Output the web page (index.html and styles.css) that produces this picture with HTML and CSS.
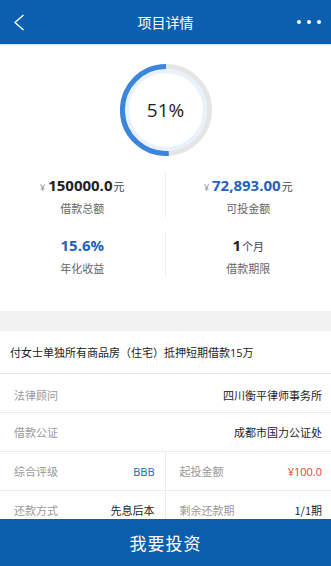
FILE: index.html
```html
<!DOCTYPE html>
<html lang="zh-CN">
<head>
<meta charset="utf-8">
<title>项目详情</title>
<link rel="stylesheet" href="styles.css">
</head>
<body>
<div class="page">
  <header class="topbar">
    <svg class="back" width="12" height="17" viewBox="0 0 12 17"><polyline points="10.5,1 2,8.5 10.5,16" fill="none" stroke="#fff" stroke-width="1.4"/></svg>
    <div class="title">项目详情</div>
    <svg class="more" width="26" height="6" viewBox="0 0 26 6"><circle cx="3" cy="3" r="2" fill="#fff"/><circle cx="13" cy="3" r="2" fill="#fff"/><circle cx="23" cy="3" r="2" fill="#fff"/></svg>
  </header>
  <main class="content">
    <section class="summary">
      <div class="ring">
        <svg width="92" height="92" viewBox="0 0 92 92">
          <circle cx="46" cy="46" r="43.5" fill="none" stroke="#e5e5e5" stroke-width="5"/>
          <circle cx="46" cy="46" r="39" fill="none" stroke="#e8f1fc" stroke-width="4"/>
          <path d="M46 2.5 A43.5 43.5 0 1 0 48.73 89.41" fill="none" stroke="#3b86dc" stroke-width="5"/>
        </svg>
        <span class="ring-text">51%</span>
      </div>
      <div class="stats">
        <div class="stat">
          <div class="val"><span class="yen">¥</span><b>150000.0</b><span class="unit">元</span></div>
          <div class="lbl">借款总额</div>
        </div>
        <div class="stat">
          <div class="val"><span class="yen">¥</span><b class="blue">72,893.00</b><span class="unit">元</span></div>
          <div class="lbl">可投金额</div>
        </div>
        <div class="stat">
          <div class="val"><b class="blue">15.6%</b></div>
          <div class="lbl">年化收益</div>
        </div>
        <div class="stat">
          <div class="val"><b>1</b><span class="unit">个月</span></div>
          <div class="lbl">借款期限</div>
        </div>
      </div>
    </section>
    <div class="gap"></div>
    <section class="details">
      <div class="proj-title">付女士单独所有商品房（住宅）抵押短期借款15万</div>
      <div class="row"><span class="k">法律顾问</span><span class="v">四川衡平律师事务所</span></div>
      <div class="row"><span class="k">借款公证</span><span class="v">成都市国力公证处</span></div>
      <div class="row split">
        <div class="cell"><span class="k">综合评级</span><span class="v blue">BBB</span></div>
        <div class="cell"><span class="k">起投金额</span><span class="v red">¥100.0</span></div>
      </div>
      <div class="row split">
        <div class="cell"><span class="k">还款方式</span><span class="v">先息后本</span></div>
        <div class="cell"><span class="k">剩余还款期</span><span class="v">1/1期</span></div>
      </div>
    </section>
  </main>
  <button class="invest">我要投资</button>
</div>
</body>
</html>
```

FILE: styles.css
```css
* { box-sizing: border-box; }
html, body { margin: 0; padding: 0; }
body {
  font-family: "Open Sans", "Noto Sans CJK SC", sans-serif;
  background: #fff;
  color: #333;
}
.page {
  height: 100vh;
  display: flex;
  flex-direction: column;
  overflow: hidden;
}
.topbar {
  flex: 0 0 auto;
  height: 45px;
  background: #0b5fae;
  border-bottom: 1px solid #d5e4f3;
  display: grid;
  grid-template-columns: 1fr auto 1fr;
  align-items: center;
}
.back { margin-left: 13px; }
.title {
  color: #fff;
  font-size: 14px;
  font-family: "Noto Sans CJK SC", sans-serif;
}
.more { justify-self: end; margin-right: 9px; }
.content {
  flex: 1 1 auto;
  overflow: hidden;
}
.summary {
  padding-top: 19px;
  padding-bottom: 33px;
}
.ring {
  width: 92px;
  height: 92px;
  margin: 0 auto;
  display: grid;
  place-items: center;
}
.ring svg, .ring-text { grid-area: 1 / 1; }
.ring-text {
  font-size: 19px;
  color: #222;
}
.stats {
  margin-top: 16px;
  display: grid;
  grid-template-columns: 1fr 1fr;
  row-gap: 14px;
}
.stat {
  padding: 2px 0;
  text-align: center;
}
.stat:nth-child(odd) { border-right: 1px solid #efefef; }
.val {
  height: 22px;
  line-height: 22px;
  color: #222;
}
.val b { font-size: 15px; font-weight: 700; }
.yen { font-size: 9px; color: #999; margin-right: 3px; }
.unit { font-size: 11px; color: #444; margin-left: 1px; font-family: "Noto Sans CJK SC", sans-serif; }
.blue { color: #2463b8; }
.red { color: #e6402c; }
.lbl {
  margin-top: 4px;
  font-size: 11px;
  line-height: 16px;
  color: #666;
  font-family: "Noto Sans CJK SC", sans-serif;
}
.gap {
  height: 20px;
  background: #f2f2f2;
}
.details { font-family: "Noto Sans CJK SC", sans-serif; }
.proj-title {
  height: 43px;
  padding-left: 10px;
  display: flex;
  align-items: center;
  font-size: 11px;
  color: #222;
  border-bottom: 1px solid #e9e9e9;
  font-family: "Open Sans", "Noto Sans CJK SC", sans-serif;
}
.row {
  height: 39px;
  border-bottom: 1px solid #ececec;
  display: flex;
  align-items: center;
  justify-content: space-between;
  padding: 0 9px 0 14px;
  font-size: 11px;
}
.row:nth-child(2) { padding-top: 4px; }
.row.split {
  display: grid;
  grid-template-columns: 1fr 1fr;
  padding: 0;
}
.cell {
  height: 100%;
  display: flex;
  align-items: center;
  justify-content: space-between;
}
.cell:first-child { padding: 0 10px 0 14px; border-right: 1px solid #ececec; }
.cell:last-child { padding: 0 9px 0 14px; }
.k { color: #999; }
.v { color: #1e1e1e; }
.v.blue { color: #2463b8; font-family: "Open Sans", sans-serif; }
.v.red { color: #e6402c; font-family: "Open Sans", sans-serif; }
.invest {
  flex: 0 0 47px;
  border: 0;
  margin: 0;
  background: #0b5ea9;
  color: #fff;
  font-size: 17px;
  font-family: "Noto Sans CJK SC", sans-serif;
  letter-spacing: 1px;
}
```
